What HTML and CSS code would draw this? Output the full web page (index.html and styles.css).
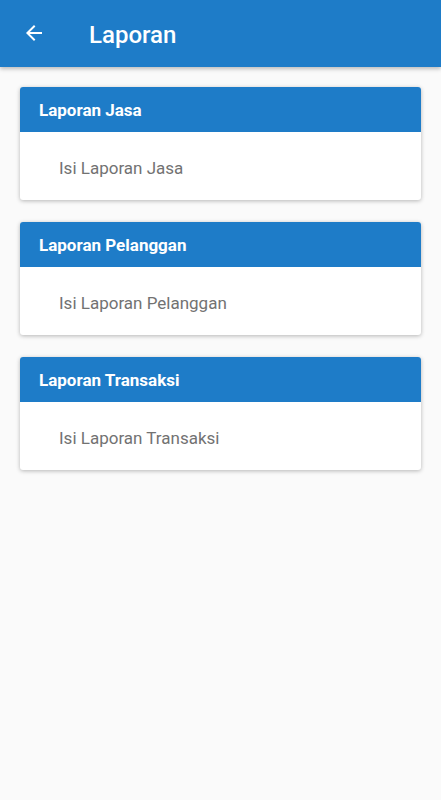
FILE: index.html
```html
<!DOCTYPE html>
<html lang="id">
<head>
<meta charset="UTF-8">
<meta name="viewport" content="width=device-width, initial-scale=1.0">
<title>Laporan</title>
<link rel="stylesheet" href="styles.css">
</head>
<body>
    <header class="app-bar">
        <button class="back-button" aria-label="Kembali">
            <svg width="24" height="24" viewBox="0 0 24 24">
                <path d="M20 11H7.83l5.59-5.59L12 4l-8 8 8 8 1.41-1.41L7.83 13H20v-2z" fill="#ffffff"/>
            </svg>
        </button>
        <h1 class="app-title">Laporan</h1>
    </header>

    <main class="report-list">
        <div class="report-card">
            <div class="report-header">Laporan Jasa</div>
            <div class="report-body">Isi Laporan Jasa</div>
        </div>
        <div class="report-card">
            <div class="report-header">Laporan Pelanggan</div>
            <div class="report-body">Isi Laporan Pelanggan</div>
        </div>
        <div class="report-card">
            <div class="report-header">Laporan Transaksi</div>
            <div class="report-body">Isi Laporan Transaksi</div>
        </div>
    </main>
</body>
</html>
```

FILE: styles.css
```css
body {
    font-family: Roboto, 'Noto Sans', Arial, sans-serif;
    background-color: #fafafa;
    margin: 0;
    height: 800px;
}
.app-bar {
    height: 67px;
    background-color: #1e7cc8;
    display: flex;
    align-items: center;
    box-shadow: 0 2px 4px rgba(0, 0, 0, 0.25);
}
.back-button {
    background: none;
    border: none;
    padding: 0;
    margin-left: 22px;
    width: 24px;
    height: 24px;
    display: flex;
    margin-top: -2px;
}
.app-title {
    margin: 0 0 0 43px;
    color: #ffffff;
    font-size: 24px;
    font-weight: 500;
    margin-top: 2px;
}
.report-list {
    padding: 20px 20px;
    display: flex;
    flex-direction: column;
    gap: 22px;
}
.report-card {
    background-color: #ffffff;
    border-radius: 3px;
    overflow: hidden;
    box-shadow: 0 1px 4px rgba(0, 0, 0, 0.28);
}
.report-header {
    background-color: #1e7cc8;
    color: #ffffff;
    font-weight: 700;
    font-size: 17px;
    height: 45px;
    display: flex;
    align-items: center;
    padding-left: 19px;
}
.report-body {
    color: #727272;
    font-size: 17px;
    line-height: 20px;
    padding: 26px 39px 22px;
}
```
